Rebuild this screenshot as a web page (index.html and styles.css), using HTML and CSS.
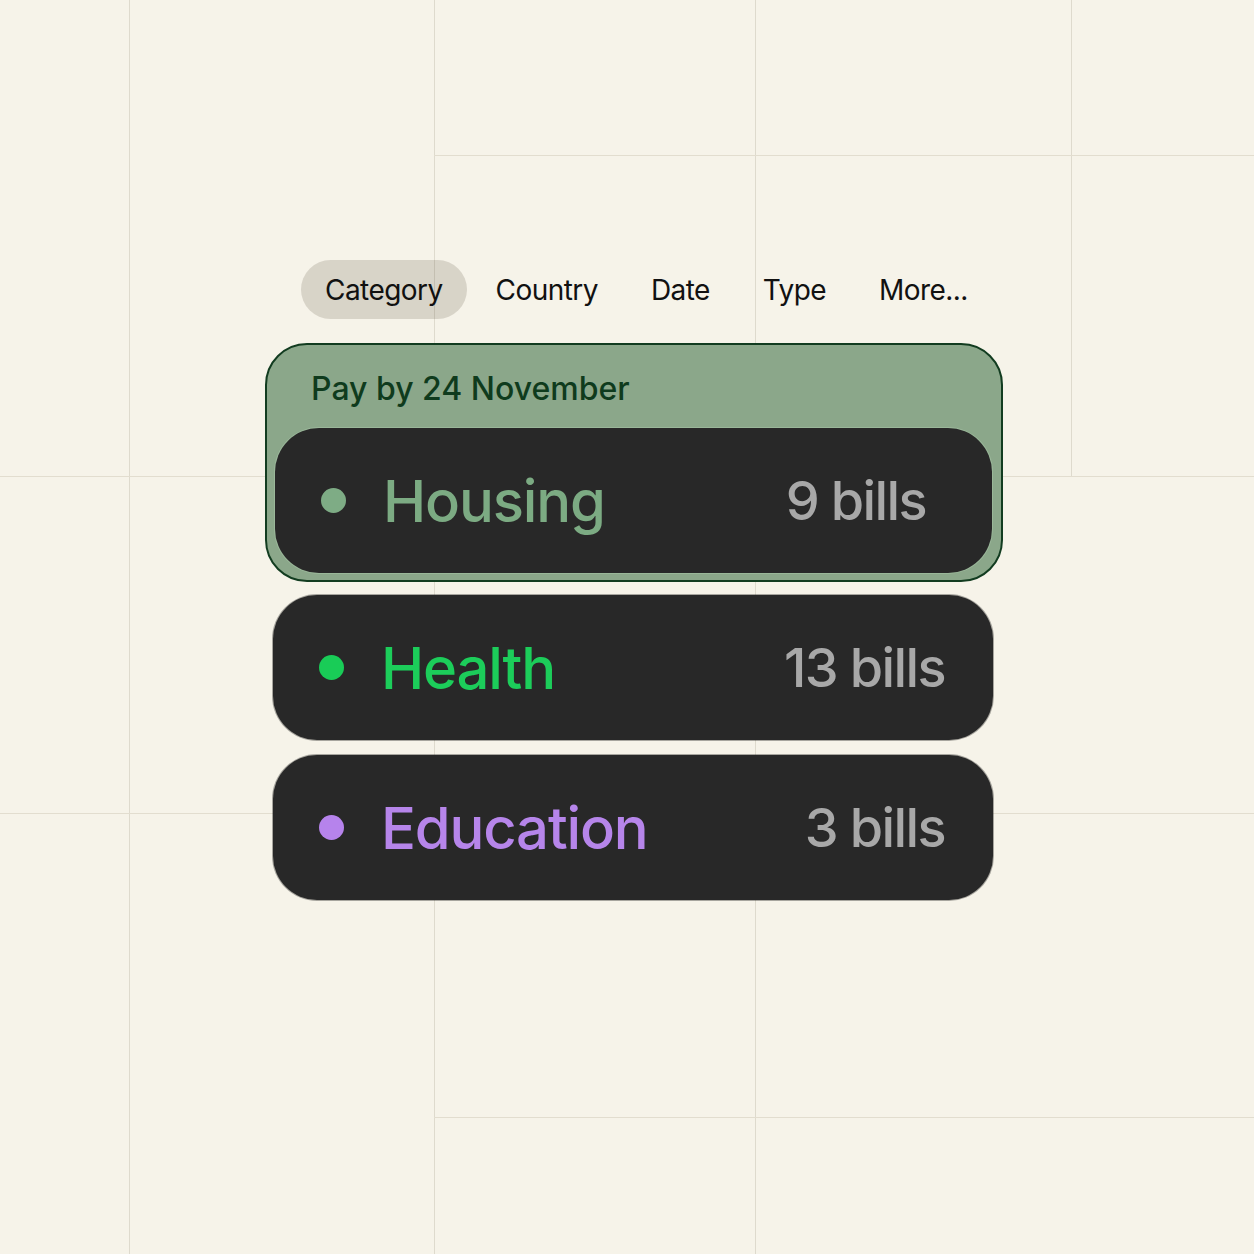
FILE: index.html
```html
<!DOCTYPE html>
<html lang="en">
<head>
<meta charset="utf-8">
<title>Bills by category</title>
<link rel="stylesheet" href="styles.css">
</head>
<body>
<div class="page">
  <div class="grid" aria-hidden="true">
    <span class="vline v1"></span>
    <span class="vline v2"></span>
    <span class="vline v3"></span>
    <span class="vline v4"></span>
    <span class="hline h1"></span>
    <span class="hline h2"></span>
    <span class="hline h3"></span>
    <span class="hline h4"></span>
  </div>

  <main class="content">
    <nav class="tabs">
      <span class="tab tab--active">Category</span>
      <span class="tab">Country</span>
      <span class="tab">Date</span>
      <span class="tab">Type</span>
      <span class="tab">More...</span>
    </nav>

    <section class="group">
      <h2 class="group-title">Pay by 24 November</h2>
      <div class="row row--nested">
        <span class="dot dot--housing"></span>
        <span class="name name--housing">Housing</span>
        <span class="count">9 bills</span>
      </div>
    </section>

    <div class="list">
      <div class="row row--plain">
        <span class="dot dot--health"></span>
        <span class="name name--health">Health</span>
        <span class="count">13 bills</span>
      </div>
      <div class="row row--plain">
        <span class="dot dot--education"></span>
        <span class="name name--education">Education</span>
        <span class="count">3 bills</span>
      </div>
    </div>
  </main>
</div>
</body>
</html>
```

FILE: styles.css
```css
* { box-sizing: border-box; }

html, body {
  margin: 0;
  padding: 0;
}

body {
  background: #f6f3e9;
  font-family: "Inter", "Noto Sans", "Liberation Sans", sans-serif;
  color: #111;
}

.page {
  position: relative;
  width: 1254px;
  height: 1254px;
  overflow: hidden;
}

/* decorative background grid */
.grid {
  position: absolute;
  inset: 0;
  pointer-events: none;
}
.vline, .hline {
  position: absolute;
  display: block;
  background: #dedacd;
}
.vline { width: 1px; }
.hline { height: 1px; background: #e2ddcf; }
.v1 { left: 129px; top: 0; height: 1254px; }
.v2 { left: 434px; top: 0; height: 1254px; }
.v3 { left: 755px; top: 0; height: 1254px; }
.v4 { left: 1071px; top: 0; height: 476px; }
.h1 { top: 155px; left: 434px; width: 820px; }
.h2 { top: 476px; left: 0; width: 1254px; }
.h3 { top: 813px; left: 0; width: 1254px; }
.h4 { top: 1117px; left: 434px; width: 820px; }

.content {
  position: relative;
  width: 738px;
  margin-left: 265px;
  padding-top: 260px;
  display: flex;
  flex-direction: column;
}

/* tabs */
.tabs {
  display: flex;
  gap: 5px;
  margin-left: 36px;
}
.tab {
  height: 59px;
  padding: 0 24px;
  display: flex;
  align-items: center;
  font-size: 28px;
  letter-spacing: -0.02em;
  color: #111;
  border-radius: 30px;
}
.tab--active {
  background: rgba(70, 60, 40, 0.17);
}

/* grouped card */
.group {
  margin-top: 24px;
  border: 2px solid #123c20;
  border-radius: 42px;
  background: #8ba78a;
  padding: 0 9px 7px 8px;
}
.group-title {
  margin: 0;
  padding: 25px 0 21px 36px;
  font-size: 32px;
  line-height: 37px;
  font-weight: 500;
  letter-spacing: 0;
  color: #0f3b1d;
}

.list {
  margin-top: 13px;
  display: flex;
  flex-direction: column;
  gap: 15px;
}

/* rows */
.row {
  height: 145px;
  border-radius: 44px;
  background: #282828;
  display: flex;
  align-items: center;
  padding: 0 48px 0 46px;
}
.row--plain {
  margin: 0 10px 0 8px;
  box-shadow: 0 0 0 1px rgba(20, 20, 20, 0.35);
}
.row--nested {
  padding-right: 66px;
  box-shadow: 0 0 0 1px rgba(200, 230, 200, 0.25);
}

.dot {
  width: 25px;
  height: 25px;
  border-radius: 50%;
  flex: none;
}
.dot--housing { background: #7eac85; }
.dot--health { background: #19cc57; }
.dot--education { background: #b683ec; }

.name {
  margin-left: 37px;
  font-size: 58px;
  line-height: 70px;
  font-weight: 500;
  letter-spacing: -0.02em;
}
.name--housing { color: #7cab83; }
.name--health { color: #1ccd5a; }
.name--education { color: #b685ea; }

.count {
  margin-left: auto;
  font-size: 54px;
  line-height: 70px;
  font-weight: 500;
  letter-spacing: -0.03em;
  color: #a8a8a8;
}
```
